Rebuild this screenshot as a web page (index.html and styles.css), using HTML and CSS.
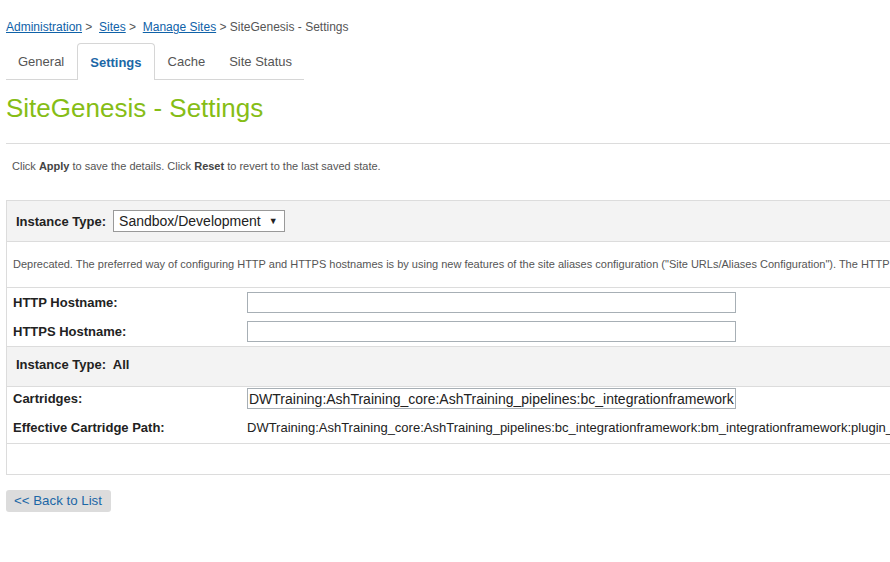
FILE: index.html
```html
<!DOCTYPE html>
<html>
<head>
<meta charset="utf-8">
<link rel="stylesheet" href="styles.css">
</head>
<body>
<div class="page">
  <div class="crumbs">
    <a href="#">Administration</a>&nbsp;&gt;&nbsp; <a href="#">Sites</a>&nbsp;&gt;&nbsp; <a href="#">Manage Sites</a>&nbsp;&gt; SiteGenesis - Settings
  </div>
  <ul class="tabs">
    <li class="tab">General</li>
    <li class="tab active">Settings</li>
    <li class="tab">Cache</li>
    <li class="tab">Site Status</li>
  </ul>
  <h1 class="title">SiteGenesis - Settings</h1>
  <div class="rule"></div>
  <p class="hint">Click <b>Apply</b> to save the details. Click <b>Reset</b> to revert to the last saved state.</p>

  <div class="box">
    <div class="row head">
      <span class="head-label">Instance Type:</span>
      <span class="select">Sandbox/Development <span class="arrow">&#9660;</span></span>
    </div>
    <div class="row note">Deprecated. The preferred way of configuring HTTP and HTTPS hostnames is by using new features of the site aliases configuration ("Site URLs/Aliases Configuration"). The HTTP and HTTPS hostnames defined here are used as fallback.</div>
    <div class="row group hosts">
      <div class="field"><span class="label">HTTP Hostname:</span><input class="input" type="text"></div>
      <div class="field"><span class="label">HTTPS Hostname:</span><input class="input" type="text"></div>
    </div>
    <div class="row head head2">
      <span class="head-label">Instance Type:&nbsp; All</span>
    </div>
    <div class="row group carts">
      <div class="field"><span class="label">Cartridges:</span><input class="input cart" type="text" value="DWTraining:AshTraining_core:AshTraining_pipelines:bc_integrationframework"></div>
      <div class="field path"><span class="label">Effective Cartridge Path:</span><span class="value">DWTraining:AshTraining_core:AshTraining_pipelines:bc_integrationframework:bm_integrationframework:plugin_</span></div>
    </div>
    <div class="row blank"></div>
  </div>

  <a href="#" class="back">&lt;&lt; Back to List</a>
</div>
</body>
</html>
```
FILE: styles.css
```css
html, body {
  margin: 0;
  padding: 0;
  background: #fff;
  overflow: hidden;
}
body {
  font-family: "Liberation Sans", Arial, sans-serif;
  color: #555;
}
.page {
  padding-left: 6px;
  width: 884px;
  overflow: hidden;
}
.crumbs {
  margin-top: 20px;
  font-size: 12px;
  line-height: 14px;
  color: #555;
  white-space: nowrap;
}
.crumbs a {
  color: #0f62a8;
  text-decoration: underline;
}
.tabs {
  list-style: none;
  margin: 9px 0 0 0;
  padding: 0;
  display: flex;
  width: 298px;
  border-bottom: 1px solid #d6d6d6;
  height: 36px;
}
.tab {
  flex: none;
  white-space: nowrap;
  font-size: 13px;
  color: #555;
  padding: 0 12px;
  border: 1px solid transparent;
  border-bottom: none;
  line-height: 34px;
  height: 36px;
  box-sizing: border-box;
  margin-top: 1px;
}
.tab:first-child {
  padding-left: 11px;
}
.tab:last-child {
  padding-left: 10px;
}
.tab.active {
  font-weight: bold;
  color: #1b67a6;
  border-color: #d6d6d6;
  border-radius: 4px 4px 0 0;
  background: #fff;
  height: 37px;
  margin-top: 0;
  line-height: 37px;
  padding: 0 12px;
}
.title {
  margin: 13px 0 0 0;
  font-size: 26px;
  font-weight: normal;
  line-height: 30px;
  color: #86bd16;
}
.rule {
  margin-top: 20px;
  height: 1px;
  background: #dcdcdc;
  width: 1200px;
}
.hint {
  margin: 15px 0 0 6px;
  font-size: 11px;
  line-height: 14px;
  color: #555;
}
.hint b {
  color: #444;
}
.box {
  margin-top: 27px;
  width: 1400px;
  border-left: 1px solid #dcdcdc;
  border-top: 1px solid #dcdcdc;
}
.row {
  border-bottom: 1px solid #dcdcdc;
  box-sizing: border-box;
}
.head {
  background: #f3f3f3;
  display: flex;
  align-items: center;
  height: 41px;
  padding-left: 9px;
}
.head2 {
  height: 40px;
  padding-bottom: 4px;
}
.head-label {
  font-size: 13px;
  font-weight: bold;
  color: #222;
  margin-right: 7px;
}
.select {
  display: inline-flex;
  align-items: center;
  box-sizing: border-box;
  width: 172px;
  height: 22px;
  border: 1px solid #999;
  background: #fff;
  font-size: 14px;
  color: #222;
  padding-left: 5px;
  white-space: nowrap;
}
.arrow {
  font-size: 9px;
  margin-left: 8px;
  color: #222;
}
.note {
  height: 46px;
  font-size: 11px;
  line-height: 44px;
  padding-left: 6px;
  white-space: nowrap;
  color: #555;
}
.group {
  display: flex;
  flex-direction: column;
}
.hosts {
  padding: 4px 0 4px;
  gap: 8px;
  height: 59px;
}
.field {
  display: flex;
  align-items: center;
  height: 21px;
}
.label {
  width: 234px;
  padding-left: 6px;
  font-size: 13px;
  font-weight: bold;
  color: #222;
  flex: none;
}
.input {
  margin: 0;
  box-sizing: border-box;
  width: 489px;
  height: 21px;
  border: 1px solid #a7afb5;
  padding: 0 0 0 1px;
  font-family: "Liberation Sans", Arial, sans-serif;
  font-size: 14px;
  color: #222;
  background: #fff;
}
.carts {
  padding-top: 1px;
  gap: 7px;
  height: 57px;
}
.path {
  height: 22px;
}
.value {
  font-size: 13px;
  color: #222;
  white-space: nowrap;
}
.blank {
  height: 31px;
}
.back {
  display: inline-block;
  margin-top: 15px;
  height: 22px;
  line-height: 22px;
  padding: 0 9px 0 8px;
  background: #dcdcdc;
  border-radius: 3px;
  font-size: 13.3px;
  color: #1b67a6;
  text-decoration: none;
}
```
